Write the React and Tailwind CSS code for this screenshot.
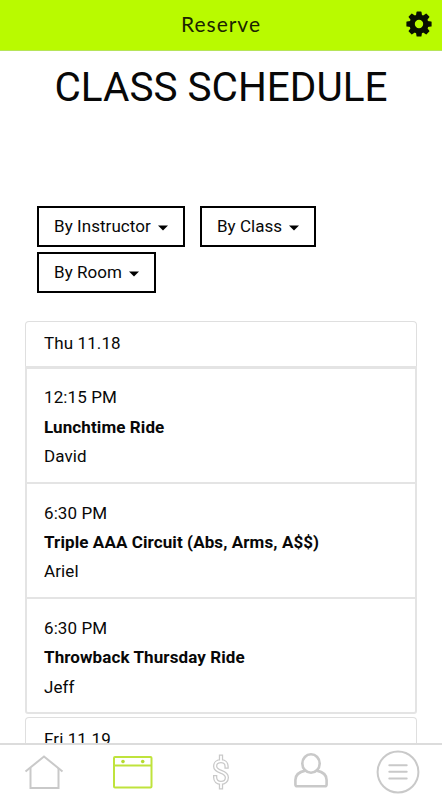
const filters = ["By Instructor", "By Class", "By Room"];

const classes = [
  { time: "12:15 PM", name: "Lunchtime Ride", instructor: "David" },
  { time: "6:30 PM", name: "Triple AAA Circuit (Abs, Arms, A$$)", instructor: "Ariel" },
  { time: "6:30 PM", name: "Throwback Thursday Ride", instructor: "Jeff" },
];

function GearIcon() {
  return (
    <svg width="26" height="26" viewBox="-13 -13 26 26" fill="none">
      <circle r="6.9" stroke="#080f00" strokeWidth="5.4" />
      {[0, 45, 90, 135, 180, 225, 270, 315].map((angle) => (
        <path
          key={angle}
          d="M-3 -8.5 L-2.5 -12.1 Q-2.4 -12.6 -1.9 -12.6 H1.9 Q2.4 -12.6 2.5 -12.1 L3 -8.5Z"
          fill="#080f00"
          transform={`rotate(${angle})`}
        />
      ))}
    </svg>
  );
}

function HomeIcon() {
  return (
    <svg className="mb-px" width="40" height="36" viewBox="0 0 40 36" fill="none" stroke="#c9c9c9" strokeWidth="2">
      <path d="M1.5 17.5 L20 2.5 L38.5 17.5" />
      <path d="M6.5 14 V34 H34.5 V14" />
    </svg>
  );
}

function CalendarIcon() {
  return (
    <svg className="mb-px" width="42" height="34" viewBox="0 0 42 34" fill="none" stroke="#bfe33c" strokeWidth="2">
      <rect x="2" y="2" width="37.5" height="30.5" rx="1" />
      <path d="M2 10.5 H39.5" />
      <circle cx="11" cy="6.5" r="1.8" fill="#b5da32" stroke="none" />
      <circle cx="30.7" cy="6.5" r="1.8" fill="#b5da32" stroke="none" />
    </svg>
  );
}

// Hollow dollar sign: a wide grey stroke with a narrower white one on top
function DollarIcon() {
  const sign =
    "M10 2 V7 M10 31 V36 M16.2 13 C16.2 9 13.6 7 10 7 C6 7 3.5 9.3 3.5 12.6 C3.5 20 16.5 17.5 16.5 25 C16.5 28.7 13.8 31 10 31 C6 31 3.5 28.7 3.5 24.8";
  return (
    <svg className="mb-px" width="20" height="38" viewBox="0 0 20 38" fill="none">
      <path d={sign} stroke="#c9c9c9" strokeWidth="4.8" strokeLinecap="square" strokeLinejoin="round" transform="translate(1 1.9) scale(.9)" />
      <path d={sign} stroke="white" strokeWidth="2" strokeLinecap="square" strokeLinejoin="round" transform="translate(1 1.9) scale(.9)" />
    </svg>
  );
}

function UserIcon() {
  return (
    <svg className="mb-[3px] ml-[3px]" width="36" height="36" viewBox="0 0 36 36" fill="none" stroke="#c9c9c9" strokeWidth="2.6" strokeLinejoin="round">
      <ellipse cx="18" cy="10.5" rx="8.7" ry="9.2" />
      <path d="M12.2 17.6 C6.5 18.7 2.4 22 2.4 27 V31.5 Q2.4 33.3 4.2 33.3 H31.8 Q33.6 33.3 33.6 31.5 V27 C33.6 22 29.4 18.7 23.8 17.6" />
    </svg>
  );
}

function MenuIcon() {
  return (
    <svg className="mb-px" width="44" height="44" viewBox="0 0 44 44" fill="none" stroke="#c9c9c9" strokeWidth="2">
      <circle cx="22" cy="22" r="20.4" />
      <path d="M13.3 15.2 H30.7 M13.3 21.8 H30.7 M13.3 28.4 H30.7" strokeLinecap="round" />
    </svg>
  );
}

function FilterButton({ label }) {
  return (
    <button className="flex h-[41px] items-center border-2 border-black px-[15px] pb-px text-[17px] leading-none tracking-[0.06px]">
      {label}
      <svg className="mt-[3px] ml-[7px]" width="10" height="6" viewBox="0 0 10 6">
        <path d="M0 .5 H10 L5 5.5Z" fill="black" />
      </svg>
    </button>
  );
}

function DayHeader({ label }) {
  return (
    <div className="h-[45px] rounded-t-[4px] border border-b-0 border-[#dfdfdf] px-[18px] text-[17px] leading-[43px] tracking-[0.1px]">
      {label}
    </div>
  );
}

function App() {
  return (
    <div className="flex h-[800px] w-full flex-col overflow-hidden bg-white font-['Roboto',sans-serif] text-[#080808]">
      <header className="grid h-[51px] shrink-0 grid-cols-[1fr_auto_1fr] items-center border-b border-[#b6e45a] bg-[#b9fa00]">
        <h2 className="col-start-2 pb-[3px] font-['Lato',sans-serif] text-[21px] leading-none tracking-[1px] text-[#1b2400]">
          Reserve
        </h2>
        <button className="mr-[10px] mb-[2px] justify-self-end">
          <GearIcon />
        </button>
      </header>

      <main className="min-h-0 flex-1 overflow-hidden">
        <h1 className="mt-[13px] text-center text-[40.5px] leading-[47px]">CLASS SCHEDULE</h1>

        <div className="mt-[95px] ml-[37px] flex w-[300px] flex-wrap gap-x-[15px] gap-y-[5.4px]">
          {filters.map((label) => (
            <FilterButton key={label} label={label} />
          ))}
        </div>

        <section className="mx-[25px] mt-[27.6px]">
          <DayHeader label="Thu 11.18" />
          <ul className="rounded-b-[3px] border-2 border-t-[3px] border-[#e4e4e4]">
            {classes.map((item) => (
              <li
                key={item.name}
                className="h-[115.2px] border-b-2 border-[#e4e4e4] px-[17px] pt-[14.4px] text-[17px] leading-[29.4px] tracking-[0.1px] last:h-[113px] last:border-b-0"
              >
                <p>{item.time}</p>
                <p className="font-bold">{item.name}</p>
                <p>{item.instructor}</p>
              </li>
            ))}
          </ul>
        </section>

        <section className="mx-[25px] mt-[3px]">
          <DayHeader label="Fri 11.19" />
        </section>
      </main>

      <nav className="grid h-[57px] shrink-0 grid-cols-5 place-items-center border-t-2 border-[#dcdcdc] bg-white">
        <HomeIcon />
        <CalendarIcon />
        <DollarIcon />
        <UserIcon />
        <MenuIcon />
      </nav>
    </div>
  );
}

export default App;
